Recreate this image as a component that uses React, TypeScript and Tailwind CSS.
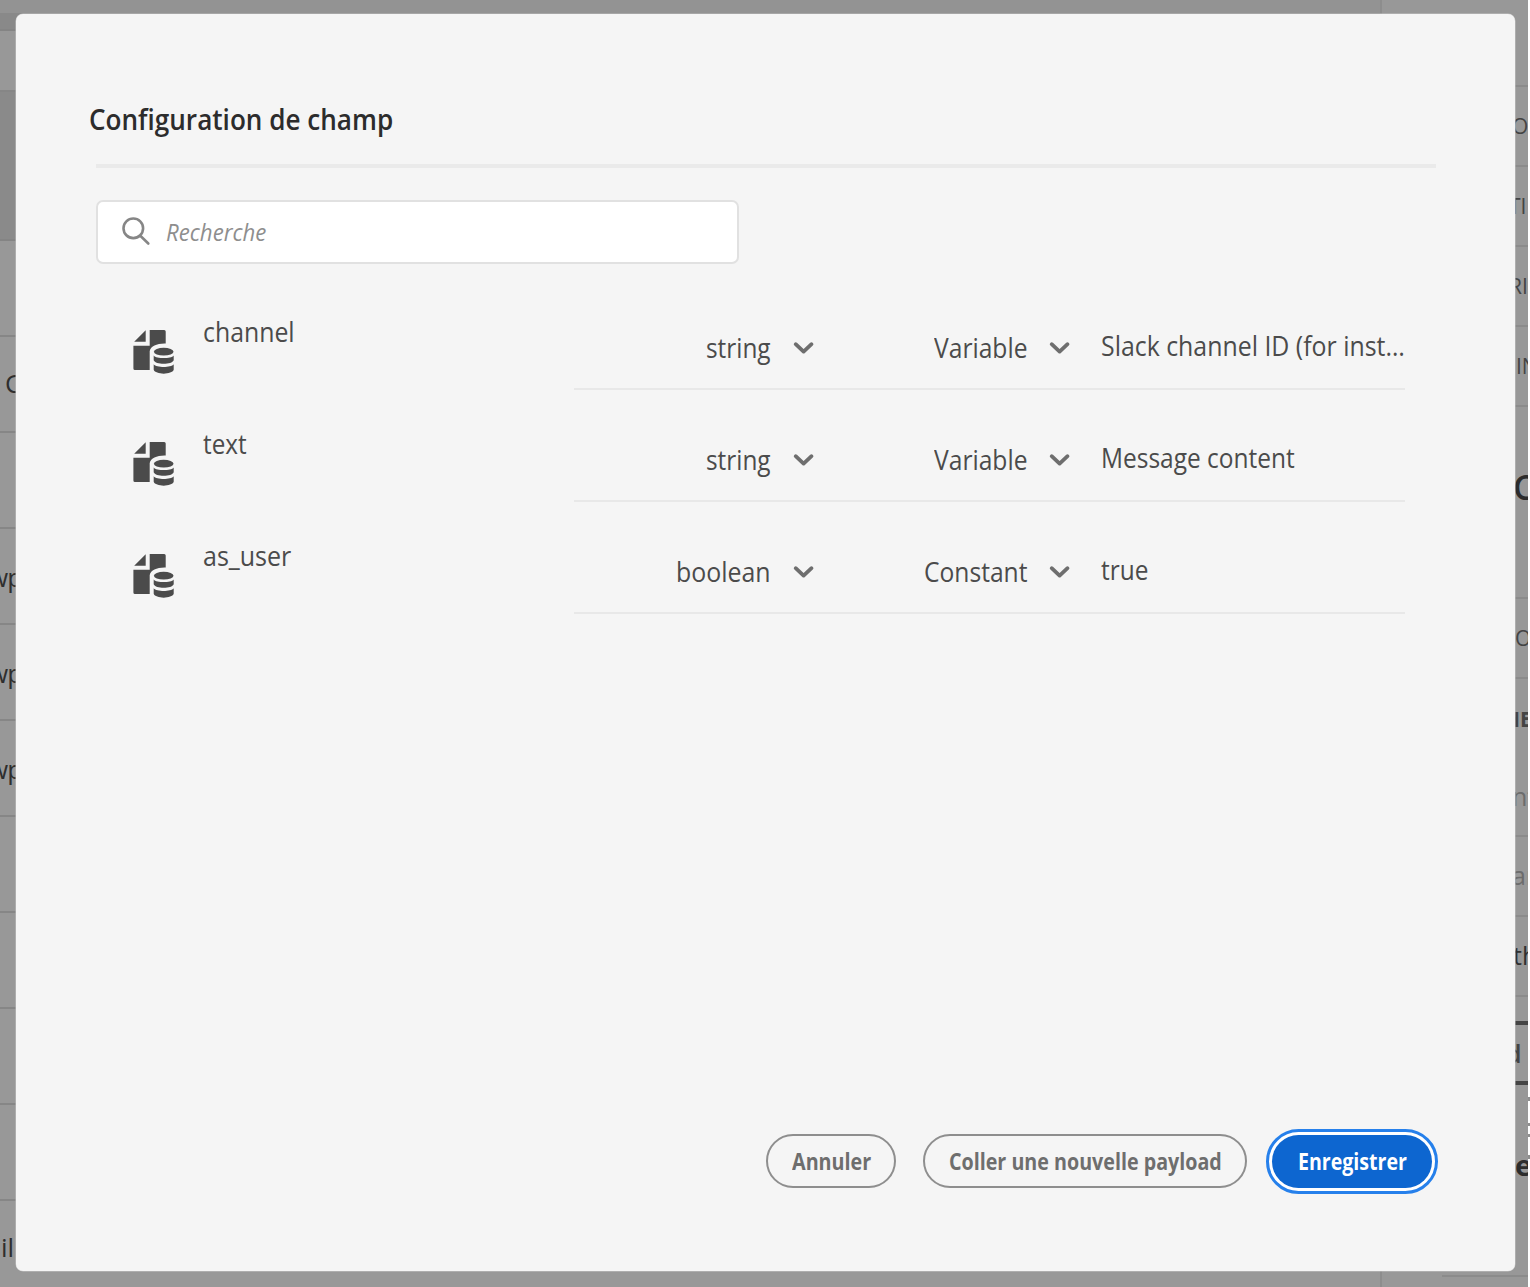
import { useLayoutEffect, useRef, useState } from "react";
import type { ReactNode } from "react";

/* A single line of text condensed or widened to an exact width. */
function Fit({ w, right, className = "", children }: { w: number; right?: boolean; className?: string; children: ReactNode }) {
  const ref = useRef<HTMLSpanElement>(null);
  const [k, setK] = useState(1);
  useLayoutEffect(() => {
    if (ref.current) setK(w / ref.current.offsetWidth);
  }, [w]);
  return (
    <span className={`flex shrink-0 whitespace-nowrap ${right ? "justify-end" : "justify-start"} ${className}`} style={{ width: w }}>
      <span
        ref={ref}
        className={`inline-block shrink-0 ${right ? "origin-right" : "origin-left"}`}
        style={{ transform: `scaleX(${k})` }}
      >
        {children}
      </span>
    </span>
  );
}

function DataIcon() {
  return (
    <svg className="mt-[50px] h-12 w-11 shrink-0" viewBox="32 28 44 48" fill="#4b4b4b">
      <path d="M34.2 41.7 45.7 30.2V41.7Z" />
      <path d="M49.7 30H64.2Q65.7 30 65.7 31.5V43.6C57 43.3 50.8 46.2 49.7 51V70H35Q33.4 70 33.4 68.4V45.7H49.7Z" />
      <ellipse cx="63.7" cy="51.7" rx="9.8" ry="3.9" />
      <path d="M53.7 55.4C56.5 59 70.9 59 73.7 55.4V60.2C72 65 55.4 65 53.7 60.2Z" />
      <path d="M53.7 64.2C56.5 67.8 70.9 67.8 73.7 64.2V69.8C72 74.9 55.4 74.9 53.7 69.8Z" />
    </svg>
  );
}

function Chevron() {
  return (
    <svg className="h-4 w-[22px] shrink-0" viewBox="0 0 22 16" fill="none" stroke="#6e6e6e" strokeWidth="3.8" strokeLinecap="round" strokeLinejoin="round">
      <path d="M2.7 4.2 10.6 11.6 18.5 4.2" />
    </svg>
  );
}

const fields = [
  { name: "channel", nameW: 92, type: "string", typeW: 65, kind: "Variable", kindW: 93, value: "Slack channel ID (for inst…", valueW: 304 },
  { name: "text", nameW: 44, type: "string", typeW: 65, kind: "Variable", kindW: 93, value: "Message content", valueW: 194 },
  { name: "as_user", nameW: 88, type: "boolean", typeW: 95, kind: "Constant", kindW: 103, value: "true", valueW: 47 },
];

const leftRows = ["C", "", "wp", "wp", "wp", "", "", "", "", "il"];

function Backdrop() {
  return (
    <div className="flex h-full w-full">
      <div className="flex w-[1382px] flex-col overflow-hidden border-r-2 border-[#8d8d8d] bg-[#989898]">
        <div className="h-[13px] shrink-0 bg-[#939393]" />
        <div className="h-[18px] shrink-0 border-b-2 border-[#848484] bg-[#898989]" />
        <div className="h-[61px] shrink-0 border-b-2 border-[#868686]" />
        <div className="h-[149px] shrink-0 border-b-2 border-[#848484] bg-[#8a8a8a]" />
        <div className="h-24 shrink-0 border-b-2 border-[#868686]" />
        {leftRows.map((t, i) => (
          <div key={i} className="flex h-24 shrink-0 items-center border-b-2 border-[#868686] text-[26px] font-medium leading-8 text-[#2e2e2e]">
            {t === "C" && <span className="-mt-0.5 ml-[5px]">C</span>}
            {t === "wp" && <span className="-ml-[12px] mt-0.5 tracking-[-1px]">wp</span>}
            {t === "il" && <span className="-mt-0.5 ml-px">il</span>}
          </div>
        ))}
      </div>
      <div className="flex w-[146px] flex-col overflow-hidden bg-[#989898] text-[21px] leading-7 text-[#444]">
        <div className="h-[87px] shrink-0 border-b-2 border-[#8b8b8b]" />
        <div className="flex h-20 shrink-0 items-center border-b-2 border-[#8b8b8b] pl-[130px]">O</div>
        <div className="flex h-20 shrink-0 items-center border-b-2 border-[#8b8b8b] pl-[127px]">TI</div>
        <div className="flex h-20 shrink-0 items-center border-b-2 border-[#8b8b8b] pl-[127px]">RI</div>
        <div className="flex h-20 shrink-0 items-center border-b-2 border-[#8b8b8b] pl-[134px]">IN</div>
        <div className="h-48 shrink-0 border-b-2 border-[#8b8b8b] pl-[131px] pt-[60px] text-[34px] font-semibold leading-[40px] text-[#2c2c2c]">C</div>
        <div className="flex h-20 shrink-0 items-center border-b-2 border-[#8b8b8b] pl-[133px]">O</div>
        <div className="flex h-20 shrink-0 items-center pl-[122px] font-bold">HE</div>
        <div className="flex h-[78px] shrink-0 items-center border-b-2 border-[#8b8b8b] pb-0.5 pl-[130px] text-[25px] text-[#6c6c6c]">nt</div>
        <div className="flex h-20 shrink-0 items-center border-b-2 border-[#8b8b8b] pb-0.5 pl-[130px] text-[25px] text-[#6c6c6c]">ar</div>
        <div className="flex h-20 shrink-0 items-center border-b-2 border-[#8b8b8b] pb-0.5 pl-[131px] text-[25px] font-medium text-[#303030]">th</div>
        <div className="mt-6 flex h-16 shrink-0 items-center border-y-4 border-[#444] pl-[124px] text-[25px] font-semibold">d</div>
        <div className="mt-[63px] h-10 shrink-0 pl-[133px] text-[29px] font-bold leading-[34px] text-[#2c2c2c]">e</div>
        <div className="ml-[60px] mt-[87px] h-0.5 shrink-0 bg-[#8b8b8b]" />
      </div>
      <div className="flex w-0.5 flex-col bg-white pt-[1097px]">
        <div className="h-1 bg-[#909090]" />
        <div className="mt-[22px] h-[3px] bg-[#909090]" />
        <div className="mt-2 h-[3px] bg-[#909090]" />
        <div className="mt-[18px] h-1 bg-[#909090]" />
      </div>
    </div>
  );
}

export default function App() {
  return (
    <div className="relative h-[1287px] w-[1530px] overflow-hidden bg-[#989898] font-['Open_Sans','Noto_Sans',sans-serif]">
      <Backdrop />
      <div role="dialog" className="absolute left-4 top-3.5 flex h-[1257px] w-[1499px] flex-col rounded-[7px] bg-[#f5f5f5] pl-20 pr-[79px] shadow-[0_0_0_0.5px_#c4c4c4]">
        <h1 className="-ml-[7px] mt-[87px] text-[28px] font-semibold leading-9 text-[#2c2c2c]">
          <Fit w={304}>Configuration de champ</Fit>
        </h1>
        <div className="mt-[27px] h-[3.5px] shrink-0 bg-[#eaeaea]" />
        <div className="mt-[32px] flex h-16 w-[643px] shrink-0 items-center rounded-[7px] border-2 border-[#e1e1e1] bg-white pl-[23px]">
          <svg className="h-[30px] w-[30px] shrink-0" viewBox="0 0 30 30" fill="none" stroke="#868686" strokeWidth="2.6" strokeLinecap="round">
            <circle cx="12.3" cy="11.3" r="9.8" />
            <path d="M19.3 18.8 27.3 26.5" />
          </svg>
          <Fit w={100} className="ml-[15px] text-[24px] font-medium italic leading-8 text-[#8e8e8e]">Recherche</Fit>
        </div>
        <div className="ml-9 mt-[14px] flex flex-col text-[27px] font-[450] leading-8 text-[#4b4b4b]">
          {fields.map((f) => (
            <div key={f.name} className="flex h-28">
              <DataIcon />
              <div className="ml-[27px] w-[371px] shrink-0 pt-[38px]">
                <Fit w={f.nameW}>{f.name}</Fit>
              </div>
              <div className="flex w-[831px] shrink-0 border-b-2 border-[#e8e8e8]">
                <div className="flex w-[241px] shrink-0 items-start justify-end pt-[54px]">
                  <Fit w={f.typeW} right>{f.type}</Fit>
                  <div className="ml-[22px] mt-2"><Chevron /></div>
                </div>
                <div className="flex w-64 shrink-0 items-start justify-end pt-[54px]">
                  <Fit w={f.kindW} right>{f.kind}</Fit>
                  <div className="ml-[22px] mt-2"><Chevron /></div>
                </div>
                <div className="pl-[30px] pt-[52px]">
                  <Fit w={f.valueW}>{f.value}</Fit>
                </div>
              </div>
            </div>
          ))}
        </div>
        <div className="mb-[77px] mr-[-2px] mt-auto flex items-start justify-end text-[23px] font-bold leading-8 text-[#6e6e6e]">
          <button className="mt-[5px] flex h-[54px] w-[130px] items-center justify-center rounded-full border-2 border-[#8e8e8e] pb-px">
            <Fit w={79}>Annuler</Fit>
          </button>
          <button className="ml-[27px] mt-[5px] flex h-[54px] w-[324px] items-center justify-center rounded-full border-2 border-[#8e8e8e] pb-px">
            <Fit w={273}>Coller une nouvelle payload</Fit>
          </button>
          <button className="ml-[19px] flex h-[65px] w-[172px] items-center justify-center rounded-full border-[3.5px] border-[#2680eb] bg-white p-[3px] text-white">
            <span className="flex h-full w-full items-center justify-center rounded-full bg-[#0d66d0] pb-0.5">
              <Fit w={109}>Enregistrer</Fit>
            </span>
          </button>
        </div>
      </div>
    </div>
  );
}
